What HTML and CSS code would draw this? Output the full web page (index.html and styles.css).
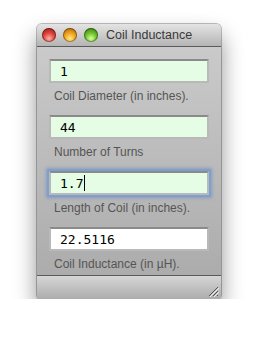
FILE: index.html
```html
<!DOCTYPE html>
<html lang="en">
<head>
    <meta charset="UTF-8">
    <title>Coil Inductance</title>
    <link rel="stylesheet" href="styles.css">
</head>
<body>
    <div class="window">
        <div class="titlebar">
            <span class="light red"></span>
            <span class="light orange"></span>
            <span class="light green"></span>
            <span class="title">Coil Inductance</span>
        </div>
        <div class="content">
            <div class="field">
                <div class="box entry">1</div>
                <div class="label">Coil Diameter (in inches).</div>
            </div>
            <div class="field">
                <div class="box entry">44</div>
                <div class="label">Number of Turns</div>
            </div>
            <div class="field">
                <div class="box entry focused">1.7<span class="caret"></span></div>
                <div class="label">Length of Coil (in inches).</div>
            </div>
            <div class="field">
                <div class="box result">22.5116</div>
                <div class="label">Coil Inductance (in µH).</div>
            </div>
        </div>
        <div class="statusbar">
            <svg class="grip" width="12" height="12" viewBox="0 0 12 12">
                <path d="M11 2 L2 11 M11 6 L6 11 M11 10 L10 11" stroke="#555" stroke-width="1"/>
                <path d="M12 3 L3 12 M12 7 L7 12" stroke="#eee" stroke-width="1"/>
            </svg>
        </div>
    </div>
</body>
</html>
```

FILE: styles.css
```css
body {
    margin: 0;
    background: #fff;
    font-family: "Liberation Sans", Arial, sans-serif;
}
.window {
    width: 184px;
    margin: 24px 0 0 37px;
    border-radius: 5px 5px 4px 4px;
    background: linear-gradient(#cdcdcd, #a9a9a9);
    box-shadow: 0 12px 22px rgba(0, 0, 0, 0.45), 0 0 0 1px rgba(0, 0, 0, 0.25);
    overflow: hidden;
}
.titlebar {
    height: 22px;
    display: flex;
    align-items: center;
    padding-left: 5px;
    background: linear-gradient(#e4e4e4, #b4b4b4);
    border-bottom: 1px solid #5a5a5a;
}
.light {
    width: 14px;
    height: 14px;
    border-radius: 50%;
    margin-right: 7px;
    box-shadow: inset 0 0 0 1px rgba(0, 0, 0, 0.35);
}
.red {
    background: radial-gradient(circle at 50% 75%, #ffb0a8 0, #e0433a 45%, #8c1410 100%);
}
.orange {
    background: radial-gradient(circle at 50% 75%, #ffe98a 0, #f0a21c 45%, #98560a 100%);
}
.green {
    background: radial-gradient(circle at 50% 75%, #d8ff9c 0, #6cc22c 45%, #2c6a0c 100%);
}
.title {
    margin-left: 1px;
    font-size: 12.5px;
    color: #3a3a3a;
}
.content {
    padding: 12px 12px 3px;
}
.field {
    margin-bottom: 11px;
}
.field:last-child {
    margin-bottom: 0;
}
.box {
    height: 20px;
    border: 2px solid #b9b9b9;
    border-top-color: #8a8a8a;
    padding-left: 9px;
    font-family: "DejaVu Sans Mono", monospace;
    font-size: 13px;
    line-height: 21px;
    color: #000;
    display: flex;
    align-items: center;
}
.entry {
    background: #e4fde4;
}
.result {
    background: #fff;
}
.focused {
    box-shadow: 0 0 0 2px #7f9fcf, 0 0 3px 3px rgba(90, 130, 200, 0.5);
}
.caret {
    display: inline-block;
    width: 1px;
    height: 16px;
    background: #000;
    margin-left: 1px;
}
.label {
    margin-top: 5px;
    padding-left: 5px;
    font-size: 12px;
    line-height: 16px;
    color: #555;
}
.statusbar {
    height: 23px;
    border-top: 1px solid #5a5a5a;
    background: linear-gradient(#d6d6d6, #acacac);
    display: flex;
    justify-content: flex-end;
    align-items: flex-end;
}
.grip {
    margin: 0 2px 2px 0;
}
```
